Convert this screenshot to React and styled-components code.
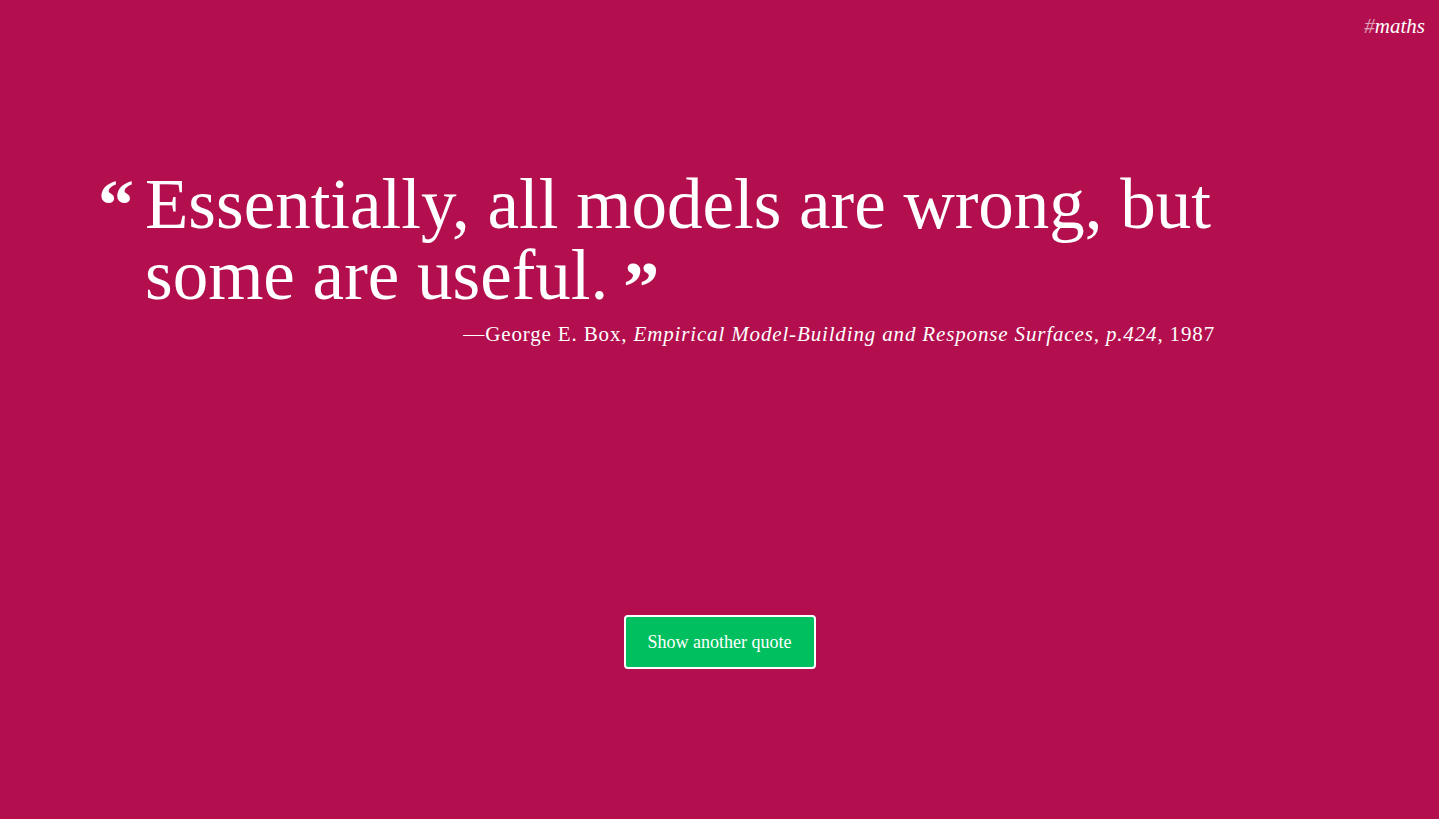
import React from "react";
import styled, { createGlobalStyle } from "styled-components";

const GlobalStyle = createGlobalStyle`
  html, body {
    margin: 0;
    padding: 0;
    background: #b30f4e;
  }
  body {
    font-family: "Liberation Serif", "Times New Roman", serif;
    color: #fff;
  }
`;

const Page = styled.div`
  min-height: 100vh;
  display: flex;
  flex-direction: column;
`;

const TopBar = styled.div`
  display: flex;
  justify-content: flex-end;
  padding: 11px 14px 0 0;
  height: 30px;
`;

const Tag = styled.span`
  font-style: italic;
  font-size: 21px;
  line-height: 30px;
  color: #fff;
`;

const Hash = styled.span`
  opacity: 0.6;
`;

const QuoteBlock = styled.div`
  width: 1118px;
  margin: 128px 0 0 100px;
`;

const QuoteRow = styled.div`
  display: flex;
  align-items: flex-start;
`;

const Mark = styled.span`
  font-weight: bold;
  font-size: 72px;
  line-height: 1;
  flex: none;
`;

const OpenMark = styled(Mark)`
  width: 45px;
  margin-left: -2px;
`;

const CloseMark = styled(Mark)`
  display: inline-block;
  vertical-align: top;
  margin: 12px 0 0 15px;
  height: 56px;
  line-height: 70px;
`;

const QuoteText = styled.p`
  margin: 0 0 0 2px;
  font-size: 71px;
  line-height: 71px;
  font-weight: normal;
`;

const Attribution = styled.p`
  margin: 8px 0 0;
  text-align: right;
  font-size: 21px;
  letter-spacing: 0.85px;
  line-height: 30px;
  padding-right: 3px;
`;

const Source = styled.em`
  font-style: italic;
`;

const ButtonRow = styled.div`
  display: flex;
  justify-content: center;
  margin-top: 266px;
`;

const Button = styled.button`
  width: 192px;
  height: 54px;
  background: #00bf5f;
  border: 2px solid #fff;
  border-radius: 4px;
  color: #fff;
  font-family: "Liberation Serif", "Times New Roman", serif;
  font-size: 18px;
  cursor: pointer;
`;

export default function App() {
  return (
    <>
      <GlobalStyle />
      <Page>
        <TopBar>
          <Tag>
            <Hash>#</Hash>maths
          </Tag>
        </TopBar>
        <QuoteBlock>
          <QuoteRow>
            <OpenMark>“</OpenMark>
            <QuoteText>
              Essentially, all models are wrong, but some are useful.
              <CloseMark>”</CloseMark>
            </QuoteText>
          </QuoteRow>
          <Attribution>
            —George E. Box,{" "}
            <Source>
              Empirical Model-Building and Response Surfaces, p.424
            </Source>
            , 1987
          </Attribution>
        </QuoteBlock>
        <ButtonRow>
          <Button>Show another quote</Button>
        </ButtonRow>
      </Page>
    </>
  );
}
